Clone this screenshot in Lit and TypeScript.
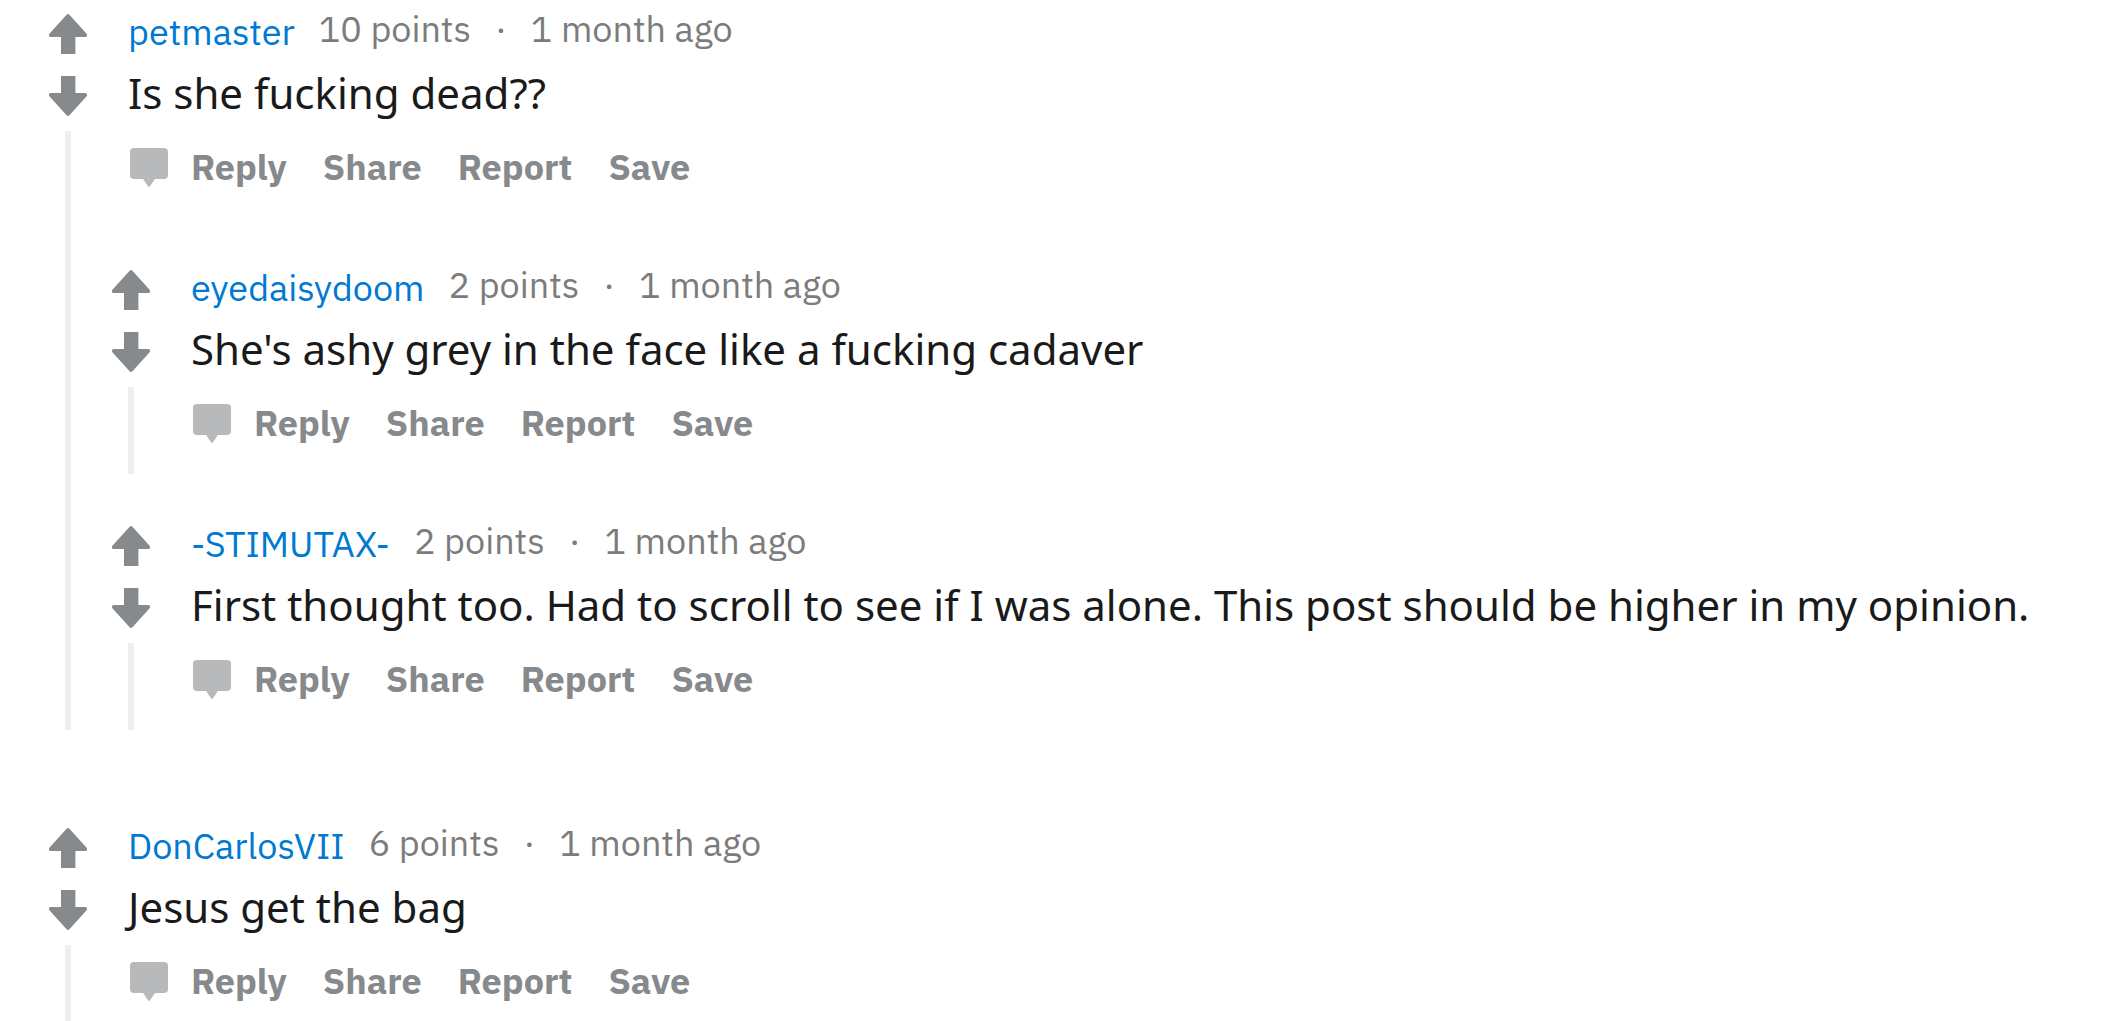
import { LitElement, html, css, svg, nothing } from "lit";
import { customElement, property } from "lit/decorators.js";

interface Comment {
  author: string;
  points: number;
  age: string;
  text: string;
  replies?: Comment[];
}

const THREAD: Comment[] = [
  {
    author: "petmaster",
    points: 10,
    age: "1 month ago",
    text: "Is she fucking dead??",
    replies: [
      {
        author: "eyedaisydoom",
        points: 2,
        age: "1 month ago",
        text: "She's ashy grey in the face like a fucking cadaver",
      },
      {
        author: "-STIMUTAX-",
        points: 2,
        age: "1 month ago",
        text: "First thought too. Had to scroll to see if I was alone. This post should be higher in my opinion.",
      },
    ],
  },
  {
    author: "DonCarlosVII",
    points: 6,
    age: "1 month ago",
    text: "Jesus get the bag",
  },
];

const ACTIONS = ["Share", "Report", "Save"];

const arrow = svg`<path d="M17.6 .8Q19 -.6 20.4 .8L37.4 19.4Q38.6 21 37.6 22.4Q37.2 23 36 23H26.4V40H12V23H2Q.8 23 .4 22.4Q-.6 21 .6 19.4Z" />`;

@customElement("thread-comment")
export class ThreadComment extends LitElement {
  @property({ attribute: false }) comment!: Comment;

  static styles = css`
    :host {
      display: block;
    }
    .comment {
      display: grid;
      grid-template-columns: 38px minmax(0, 1fr);
      column-gap: 41px;
    }
    .rail {
      display: flex;
      flex-direction: column;
      align-items: center;
    }
    button {
      display: flex;
      align-items: center;
      padding: 0;
      border: 0;
      background: none;
      color: inherit;
      font: inherit;
      cursor: pointer;
    }
    .icon {
      display: block;
      fill: currentColor;
    }
    .vote {
      color: #878a8c;
    }
    .vote.down {
      margin: 22px 0 15px;
    }
    .down .icon {
      transform: scaleY(-1);
    }
    .line {
      flex: 1;
      width: 6px;
      background: #edeff1;
    }
    .head {
      display: flex;
      align-items: flex-start;
      font-family: "IBM Plex Sans", Roboto, sans-serif;
      font-size: 36px;
    }
    .author {
      margin-right: 24px;
      line-height: 36px;
      color: #0079d3;
      text-decoration: none;
    }
    .meta {
      display: flex;
      gap: 24px;
      line-height: 30px;
      color: #7c7c7c;
    }
    .text {
      margin: 14px 0 24px;
      font-family: "Noto Sans", sans-serif;
      font-size: 42px;
      line-height: 57px;
      color: #1a1a1b;
    }
    .actions {
      display: flex;
      gap: 36px;
      padding: 0 0 29px 2px;
      font-family: "IBM Plex Sans", Roboto, sans-serif;
      font-size: 36px;
      font-weight: 700;
      line-height: 44px;
      color: #878a8c;
    }
    .reply {
      gap: 23px;
    }
    .bubble {
      color: #b8b9bb;
    }
    .replies {
      display: grid;
      gap: 52px;
      margin: 52px 0 0 -16px;
    }
  `;

  render() {
    const c = this.comment;
    return html`
      <article class="comment">
        <div class="rail">
          <button class="vote" aria-label="Upvote">
            <svg class="icon" width="38" height="40" viewBox="0 0 38 40">${arrow}</svg>
          </button>
          <button class="vote down" aria-label="Downvote">
            <svg class="icon" width="38" height="40" viewBox="0 0 38 40">${arrow}</svg>
          </button>
          <div class="line"></div>
        </div>
        <div class="content">
          <header class="head">
            <a class="author" href="#${c.author}">${c.author}</a>
            <div class="meta">
              <span>${c.points} points</span><span>·</span><time>${c.age}</time>
            </div>
          </header>
          <p class="text">${c.text}</p>
          <div class="actions">
            <button class="reply">
              <svg class="icon bubble" width="38" height="39" viewBox="0 0 38 39" aria-hidden="true">
                <path d="M4 0H34Q38 0 38 4V27Q38 31 34 31H25L20 38.2Q19 39.6 18 38.2L13 31H4Q0 31 0 27V4Q0 0 4 0Z" />
              </svg>
              Reply
            </button>
            ${ACTIONS.map((a) => html`<button>${a}</button>`)}
          </div>
          ${c.replies
            ? html`<div class="replies">
                ${c.replies.map((r) => html`<thread-comment .comment=${r}></thread-comment>`)}
              </div>`
            : nothing}
        </div>
      </article>
    `;
  }
}

@customElement("app-root")
export class AppRoot extends LitElement {
  static styles = css`
    :host {
      display: block;
      background: #ffffff;
    }
    .thread {
      display: grid;
      gap: 98px;
      padding: 14px 49px 0;
    }
  `;

  render() {
    return html`
      <main class="thread">
        ${THREAD.map((c) => html`<thread-comment .comment=${c}></thread-comment>`)}
      </main>
    `;
  }
}
